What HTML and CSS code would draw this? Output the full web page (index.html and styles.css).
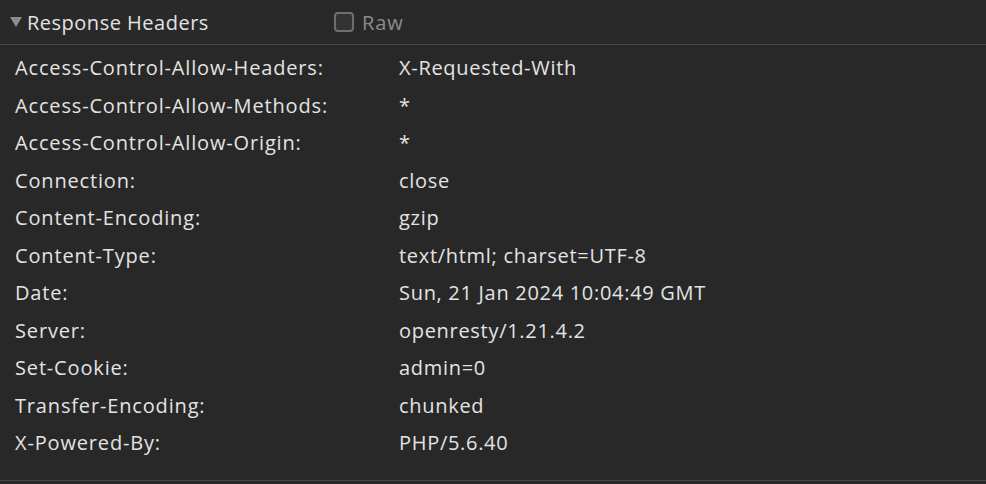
FILE: index.html
```html
<!DOCTYPE html>
<html>
<head>
<meta charset="utf-8">
<link rel="stylesheet" href="styles.css">
</head>
<body>
<div class="panel">
  <div class="header">
    <span class="twisty"></span>
    <span class="title">Response Headers</span>
    <label class="raw"><span class="box"></span><span class="raw-text">Raw</span></label>
  </div>
  <div class="rows">
    <div class="row"><span class="name">Access-Control-Allow-Headers:</span><span class="value">X-Requested-With</span></div>
    <div class="row"><span class="name">Access-Control-Allow-Methods:</span><span class="value">*</span></div>
    <div class="row"><span class="name">Access-Control-Allow-Origin:</span><span class="value">*</span></div>
    <div class="row"><span class="name">Connection:</span><span class="value">close</span></div>
    <div class="row"><span class="name">Content-Encoding:</span><span class="value">gzip</span></div>
    <div class="row"><span class="name">Content-Type:</span><span class="value">text/html; charset=UTF-8</span></div>
    <div class="row"><span class="name">Date:</span><span class="value">Sun, 21 Jan 2024 10:04:49 GMT</span></div>
    <div class="row"><span class="name">Server:</span><span class="value">openresty/1.21.4.2</span></div>
    <div class="row"><span class="name">Set-Cookie:</span><span class="value">admin=0</span></div>
    <div class="row"><span class="name">Transfer-Encoding:</span><span class="value">chunked</span></div>
    <div class="row"><span class="name">X-Powered-By:</span><span class="value">PHP/5.6.40</span></div>
  </div>
</div>
</body>
</html>
```
FILE: styles.css
```css
html, body {
  margin: 0;
  padding: 0;
  background: #282828;
}
body {
  width: 986px;
  height: 484px;
  overflow: hidden;
  font-family: "Open Sans", "Noto Sans", sans-serif;
  font-size: 20px;
  letter-spacing: 0.7px;
  color: #e3e3e3;
}
.panel {
  border-bottom: 1px solid #474747;
}
.header {
  height: 44px;
  display: flex;
  align-items: center;
  border-bottom: 1px solid #474747;
  background: #292929;
}
.twisty {
  width: 0;
  height: 0;
  margin-left: 10px;
  margin-right: 5px;
  border-left: 6px solid transparent;
  border-right: 6px solid transparent;
  border-top: 10px solid #8c8c8c;
}
.title {
  width: 307px;
  flex: none;
  letter-spacing: 0.5px;
}
.raw {
  display: flex;
  align-items: center;
  gap: 8px;
}
.box {
  width: 16px;
  height: 16px;
  border: 2px solid #6e6e6e;
  border-radius: 4px;
  background: #333;
}
.raw-text {
  color: #8c8c8c;
  letter-spacing: 0.9px;
}
.rows {
  padding: 4px 0 18px 15px;
}
.row {
  display: flex;
  height: 37.5px;
  align-items: center;
}
.name {
  width: 384px;
  flex: none;
  letter-spacing: 0.84px;
}
```
